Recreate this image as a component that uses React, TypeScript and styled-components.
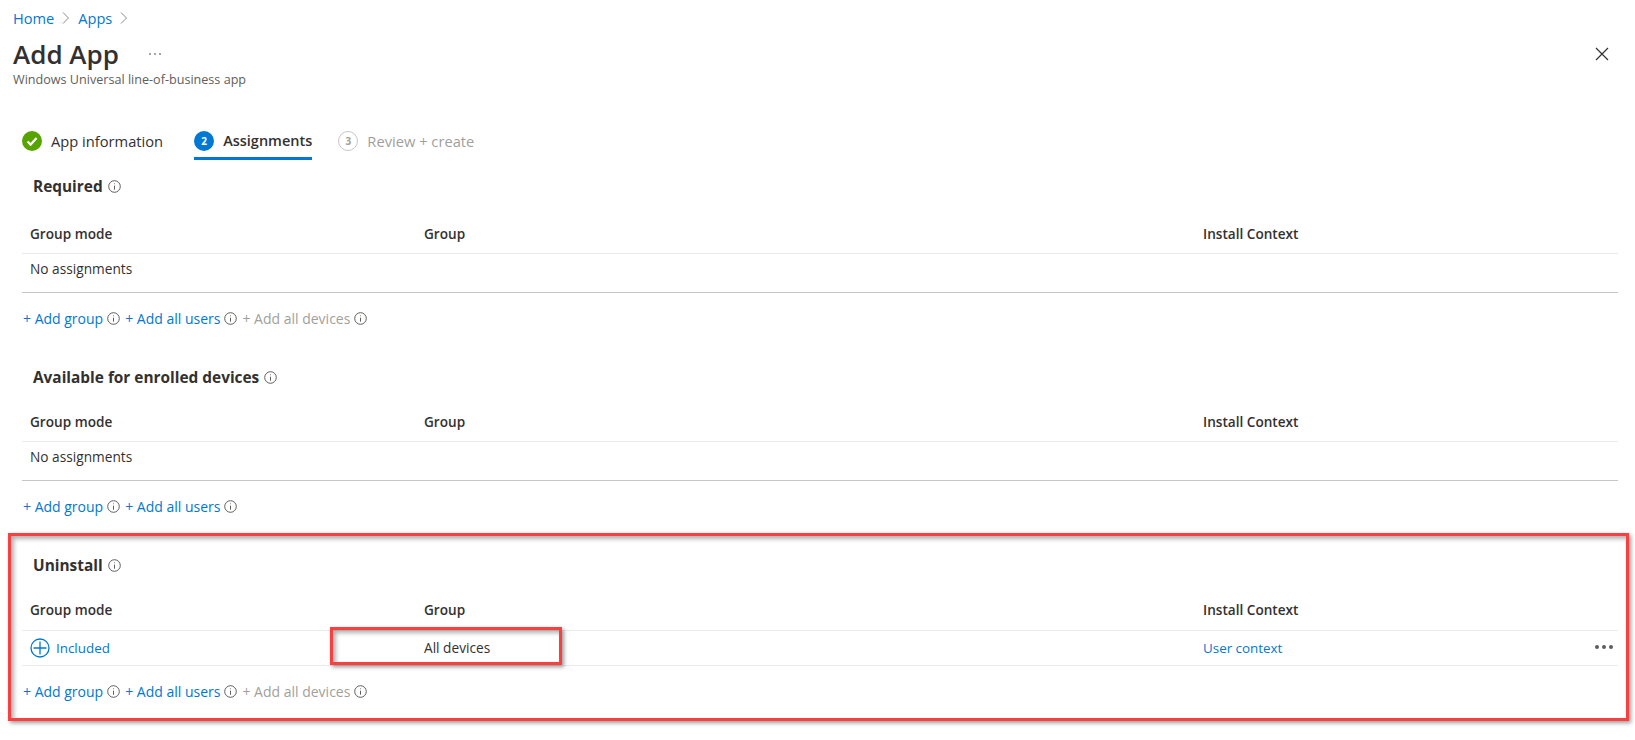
import { Fragment } from 'react';
import styled, { createGlobalStyle } from 'styled-components';

const GlobalStyle = createGlobalStyle`
  html, body {
    margin: 0;
    background: #fff;
    font-family: "Open Sans", "Noto Sans", sans-serif;
    font-size: 13px;
    color: #323130;
  }
  * { box-sizing: border-box; }
`;

// ─── Header ───────────────────────────────────────────────────────────────────

const Page = styled.div`
  position: relative;
  width: 1635px;
  height: 740px;
  overflow: hidden;
`;

const Breadcrumb = styled.nav`
  display: flex;
  align-items: center;
  height: 36px;
  padding-left: 13px;
  gap: 8px;
`;

const Crumb = styled.a`
  color: #0078d4;
  font-size: 14.6px;
`;

const TitleRow = styled.div`
  display: flex;
  align-items: center;
  justify-content: space-between;
  height: 36px;
  padding: 0 26px 0 13px;
`;

const TitleLeft = styled.div`
  display: flex;
  align-items: center;
  gap: 29px;
`;

const Title = styled.h1`
  margin: 0;
  font-size: 26px;
  font-weight: 600;
  line-height: 36px;
  color: #323130;
`;

const Subtitle = styled.div`
  height: 16px;
  line-height: 16px;
  padding-left: 13px;
  font-size: 12.6px;
  color: #605e5c;
`;

// ─── Stepper ──────────────────────────────────────────────────────────────────

const Stepper = styled.div`
  display: flex;
  margin-top: 36px;
  padding-left: 22px;
`;

const Step = styled.div<{ $active?: boolean; $disabled?: boolean }>`
  display: flex;
  align-items: center;
  gap: 9px;
  height: 36px;
  margin-right: ${({ $active }) => ($active ? 26 : 31)}px;
  font-size: ${({ $active }) => ($active ? 14.5 : 14.7)}px;
  font-weight: ${({ $active }) => ($active ? 600 : 400)};
  color: ${({ $disabled }) => ($disabled ? '#a19f9d' : '#323130')};
  border-bottom: 3px solid ${({ $active }) => ($active ? '#0078d4' : 'transparent')};
`;

const StepBadge = styled.span<{ $outlined?: boolean }>`
  display: flex;
  align-items: center;
  justify-content: center;
  width: 20px;
  height: 20px;
  border-radius: 50%;
  font-size: 10px;
  font-weight: 700;
  color: ${({ $outlined }) => ($outlined ? '#a19f9d' : '#fff')};
  background: ${({ $outlined }) => ($outlined ? '#fff' : '#0078d4')};
  border: ${({ $outlined }) => ($outlined ? '1px solid #c8c6c4' : 'none')};
`;

// ─── Assignment sections ──────────────────────────────────────────────────────

const Section = styled.section<{ $gap: number }>`
  position: relative;
  margin: ${({ $gap }) => $gap}px 17px 0 22px;
`;

const SectionTitle = styled.div`
  display: flex;
  align-items: center;
  gap: 5px;
  height: 28px;
  padding-left: 11px;
  font-size: 15.4px;
  font-weight: 700;
  color: #323130;
`;

const Table = styled.div<{ $gap: number; $headerHeight: number }>`
  display: grid;
  grid-template-columns: 394px 779px 1fr;
  grid-template-rows: ${({ $headerHeight }) => $headerHeight}px auto;
  margin-top: ${({ $gap }) => $gap}px;
`;

const HeaderCell = styled.div`
  display: flex;
  align-items: center;
  padding-left: 8px;
  font-size: 13.6px;
  font-weight: 600;
  color: #323130;
  border-bottom: 1px solid #edebe9;
`;

const EmptyRow = styled.div`
  grid-column: 1 / -1;
  height: 39px;
  padding: 6px 0 0 8px;
  line-height: 18px;
  font-size: 13.7px;
  border-bottom: 1px solid #c8c6c4;
`;

const Cell = styled.div`
  position: relative;
  display: flex;
  align-items: center;
  gap: 6px;
  height: 35px;
  padding: 0 0 1px 8px;
  font-size: 13.7px;
  border-bottom: 1px solid #edebe9;
`;

const RowLink = styled.a`
  color: #0078d4;
  font-size: 13.4px;
`;

const MoreDots = styled.span`
  position: absolute;
  right: 5px;
  top: 14px;
  display: flex;
  gap: 3px;
`;

const MoreDot = styled.i`
  width: 4px;
  height: 4px;
  border-radius: 50%;
  background: #605e5c;
`;

const Actions = styled.div<{ $gap: number }>`
  display: flex;
  align-items: center;
  height: 24px;
  margin-top: ${({ $gap }) => $gap}px;
  padding-left: 1px;
  gap: 5px;
`;

const ActionItem = styled.span<{ $disabled?: boolean }>`
  display: flex;
  align-items: center;
  gap: 4px;
  font-size: 14px;
  white-space: pre;
  color: ${({ $disabled }) => ($disabled ? '#a19f9d' : '#0078d4')};
`;

// ─── Annotations ──────────────────────────────────────────────────────────────

const redFrame = `
  position: absolute;
  border: 3px solid #f84040;
  box-shadow: 2px 2px 4px rgba(0, 0, 0, 0.4), inset 3px 3px 4px rgba(0, 0, 0, 0.3);
  pointer-events: none;
`;

const SectionFrame = styled.div`
  ${redFrame}
  left: -14px;
  right: -11px;
  top: -18px;
  height: 188px;
`;

const CellFrame = styled.div`
  ${redFrame}
  left: -86px;
  top: -4px;
  width: 232px;
  height: 38px;
`;

// ─── Icons ────────────────────────────────────────────────────────────────────

const Chevron = () => (
  <svg width="8" height="14" viewBox="0 0 8 14" fill="none" stroke="#8a8886" strokeWidth="1">
    <path d="M1 1.5 6.5 7 1 12.5" />
  </svg>
);

const Info = () => (
  <svg width="13" height="13" viewBox="0 0 13 13" fill="none" stroke="#605e5c" strokeWidth="1">
    <circle cx="6.5" cy="6.5" r="5.8" />
    <path d="M6.5 5.7v4" />
    <circle cx="6.5" cy="3.7" r="0.5" fill="#605e5c" stroke="none" />
  </svg>
);

const Ellipsis = () => (
  <svg width="14" height="4" viewBox="0 0 14 4" fill="#323130">
    <circle cx="2" cy="2" r="0.8" />
    <circle cx="7" cy="2" r="0.8" />
    <circle cx="12" cy="2" r="0.8" />
  </svg>
);

const Close = () => (
  <svg width="14" height="14" viewBox="0 0 14 14" fill="none" stroke="#323130" strokeWidth="1.2">
    <path d="M1 1l12 12M13 1 1 13" />
  </svg>
);

const CheckBadge = () => (
  <svg width="20" height="20" viewBox="0 0 20 20">
    <circle cx="10" cy="10" r="10" fill="#57a300" />
    <path d="M5.5 10.5 8.6 13.6 14.6 7" fill="none" stroke="#fff" strokeWidth="2.2" />
  </svg>
);

const PlusCircle = () => (
  <svg width="20" height="20" viewBox="0 0 20 20" fill="none" stroke="#0078d4" strokeWidth="1.3">
    <circle cx="10" cy="10" r="9" />
    <path d="M10 3.5v13M3.5 10h13" />
  </svg>
);

// ─── Component ────────────────────────────────────────────────────────────────

const columns = ['Group mode', 'Group', 'Install Context'];

const Headers = () => (
  <Fragment>
    {columns.map((c) => (
      <HeaderCell key={c}>{c}</HeaderCell>
    ))}
  </Fragment>
);

const ActionBar = ({ gap, devices }: { gap: number; devices?: boolean }) => (
  <Actions $gap={gap}>
    <ActionItem>+ Add group<Info /></ActionItem>
    <ActionItem>+ Add all users<Info /></ActionItem>
    {devices && <ActionItem $disabled>+ Add all devices<Info /></ActionItem>}
  </Actions>
);

export default function App() {
  return (
    <Page>
      <GlobalStyle />
      <Breadcrumb>
        <Crumb>Home</Crumb>
        <Chevron />
        <Crumb>Apps</Crumb>
        <Chevron />
      </Breadcrumb>
      <TitleRow>
        <TitleLeft>
          <Title>Add App</Title>
          <Ellipsis />
        </TitleLeft>
        <Close />
      </TitleRow>
      <Subtitle>Windows Universal line-of-business app</Subtitle>

      <Stepper>
        <Step>
          <CheckBadge />
          App information
        </Step>
        <Step $active>
          <StepBadge>2</StepBadge>
          Assignments
        </Step>
        <Step $disabled>
          <StepBadge $outlined>3</StepBadge>
          Review + create
        </Step>
      </Stepper>

      <Section $gap={12}>
        <SectionTitle>Required<Info /></SectionTitle>
        <Table $gap={13} $headerHeight={41}>
          <Headers />
          <EmptyRow>No assignments</EmptyRow>
        </Table>
        <ActionBar gap={13} devices />
      </Section>

      <Section $gap={33}>
        <SectionTitle>Available for enrolled devices<Info /></SectionTitle>
        <Table $gap={11} $headerHeight={40}>
          <Headers />
          <EmptyRow>No assignments</EmptyRow>
        </Table>
        <ActionBar gap={13} />
      </Section>

      <Section $gap={33}>
        <SectionFrame />
        <SectionTitle>Uninstall<Info /></SectionTitle>
        <Table $gap={10} $headerHeight={42}>
          <Headers />
          <Cell>
            <PlusCircle />
            <RowLink>Included</RowLink>
          </Cell>
          <Cell>
            All devices
            <CellFrame />
          </Cell>
          <Cell>
            <RowLink>User context</RowLink>
            <MoreDots>
              <MoreDot />
              <MoreDot />
              <MoreDot />
            </MoreDots>
          </Cell>
        </Table>
        <ActionBar gap={13} devices />
      </Section>
    </Page>
  );
}
